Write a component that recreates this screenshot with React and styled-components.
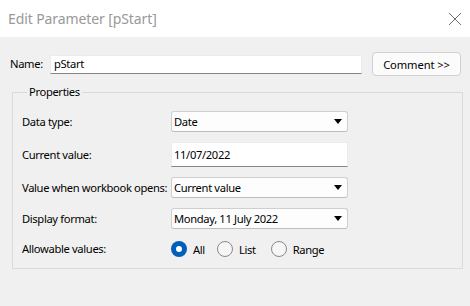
import React from "react";
import styled, { createGlobalStyle } from "styled-components";

const Global = createGlobalStyle`
  html, body { margin: 0; padding: 0; background: #f0f0f0; }
  body { font-family: "Noto Sans", "Open Sans", sans-serif; font-size: 11.2px; letter-spacing: -0.35px; color: #000; }
  * { box-sizing: border-box; }
`;

const Window = styled.div`
  width: 470px;
  height: 306px;
  display: flex;
  flex-direction: column;
  background: #f0f0f0;
  overflow: hidden;
`;

const TitleBar = styled.div`
  height: 37px;
  background: #fff;
  display: flex;
  align-items: center;
  justify-content: space-between;
  padding: 0 8px 0 8px;
  flex: none;
`;

const Title = styled.span`
  font-size: 14px;
  color: #999;
  letter-spacing: -0.1px;
`;

const CloseIcon = styled.svg`
  width: 14px;
  height: 14px;
`;

const Body = styled.div`
  flex: 1;
  display: flex;
  flex-direction: column;
  padding: 15px 9px 0 10px;
`;

const NameRow = styled.div`
  display: flex;
  align-items: center;
  height: 24px;
`;

const Label = styled.span`
  white-space: nowrap;
  line-height: 16px;
`;

const NameLabel = styled(Label)`
  width: 40px;
`;

const TextInput = styled.div`
  width: ${(p) => p.$w}px;
  height: ${(p) => p.$h}px;
  background: #fff;
  border: 1px solid #ececec;
  border-bottom: 1px solid #858585;
  display: flex;
  align-items: center;
  padding-left: ${(p) => p.$pad}px;
  line-height: 16px;
`;

const Button = styled.div`
  margin-left: 10px;
  width: 89px;
  height: 24px;
  border: 1px solid #d0d0d0;
  border-radius: 4px;
  background: #fbfbfb;
  display: flex;
  align-items: center;
  justify-content: center;
  letter-spacing: -0.1px;
`;

const Group = styled.fieldset`
  margin: 8px 0 0 2px;
  width: 451px;
  border: 1px solid #dadada;
  padding: 11px 0 11px 9px;
  display: flex;
  flex-direction: column;
`;

const Legend = styled.legend`
  margin-left: 5px;
  padding: 0 2px;
  line-height: 16px;
`;

const Row = styled.div`
  display: grid;
  grid-template-columns: 149px 177px;
  align-items: center;
  margin-top: ${(p) => p.$mt || 0}px;
`;

const Select = styled.div`
  height: 21px;
  background: #fdfdfd;
  border: 1px solid #cfcfcf;
  border-bottom-color: #bdbdbd;
  border-radius: 3px;
  display: flex;
  align-items: center;
  justify-content: space-between;
  padding: 0 5px 0 2px;
  line-height: 16px;
`;

const Arrow = styled.span`
  width: 0;
  height: 0;
  border-left: 4px solid transparent;
  border-right: 4px solid transparent;
  border-top: 5px solid #000;
`;

const Radios = styled.div`
  display: flex;
  align-items: center;
  height: 16px;
`;

const RadioItem = styled.div`
  display: flex;
  align-items: center;
  gap: 6px;
  margin-right: ${(p) => p.$mr}px;
`;

const RadioCircle = styled.span`
  width: 16px;
  height: 16px;
  border-radius: 50%;
  flex: none;
  ${(p) =>
    p.$on
      ? `background: #005fb8; display:flex; align-items:center; justify-content:center;
         &::after { content: ""; width: 6px; height: 6px; border-radius: 50%; background: #fff; }`
      : `background: #f6f6f6; border: 1px solid #8a8a8a;`}
`;

function Dropdown({ children }) {
  return (
    <Select>
      <span>{children}</span>
      <Arrow />
    </Select>
  );
}

export default function App() {
  return (
    <>
      <Global />
      <Window>
        <TitleBar>
          <Title>Edit Parameter [pStart]</Title>
          <CloseIcon viewBox="0 0 14 14">
            <path d="M1 1 L13 13 M13 1 L1 13" stroke="#6e6e6e" strokeWidth="1" fill="none" />
          </CloseIcon>
        </TitleBar>
        <Body>
          <NameRow>
            <NameLabel>Name:</NameLabel>
            <TextInput $w={312} $h={19} $pad={3}>pStart</TextInput>
            <Button>Comment &gt;&gt;</Button>
          </NameRow>
          <Group>
            <Legend>Properties</Legend>
            <Row>
              <Label>Data type:</Label>
              <Dropdown>Date</Dropdown>
            </Row>
            <Row $mt={10}>
              <Label>Current value:</Label>
              <TextInput $w={177} $h={25} $pad={2}>11/07/2022</TextInput>
            </Row>
            <Row $mt={10}>
              <Label>Value when workbook opens:</Label>
              <Dropdown>Current value</Dropdown>
            </Row>
            <Row $mt={10}>
              <Label>Display format:</Label>
              <Dropdown>Monday, 11 July 2022</Dropdown>
            </Row>
            <Row $mt={12}>
              <Label>Allowable values:</Label>
              <Radios>
                <RadioItem $mr={12}>
                  <RadioCircle $on />
                  <span>All</span>
                </RadioItem>
                <RadioItem $mr={15}>
                  <RadioCircle />
                  <span>List</span>
                </RadioItem>
                <RadioItem $mr={0}>
                  <RadioCircle />
                  <span>Range</span>
                </RadioItem>
              </Radios>
            </Row>
          </Group>
        </Body>
      </Window>
    </>
  );
}
